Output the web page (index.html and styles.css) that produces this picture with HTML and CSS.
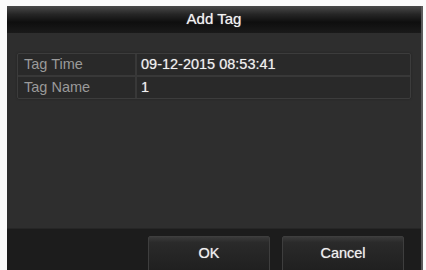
FILE: index.html
```html
<!DOCTYPE html>
<html lang="en">
<head>
    <meta charset="UTF-8">
    <title>Add Tag</title>
    <link rel="stylesheet" href="styles.css">
</head>
<body>
    <section class="dialog">
        <h1 class="dialog-title">Add Tag</h1>
        <div class="dialog-body">
            <div class="field-table">
                <div class="field-row">
                    <span class="field-label">Tag Time</span>
                    <span class="field-value">09-12-2015 08:53:41</span>
                </div>
                <div class="field-row">
                    <span class="field-label">Tag Name</span>
                    <span class="field-value">1</span>
                </div>
            </div>
        </div>
        <div class="dialog-footer">
            <button class="btn" type="button">OK</button>
            <button class="btn" type="button">Cancel</button>
        </div>
    </section>
</body>
</html>
```

FILE: styles.css
```css
html, body {
    margin: 0;
    height: 100%;
    overflow: hidden;
}

body {
    background-color: #fbfbfb;
    font-family: "Liberation Sans", Arial, sans-serif;
    padding: 6px 3px 0 7px;
    box-sizing: border-box;
}

.dialog {
    display: flex;
    flex-direction: column;
    height: 270px;
    background-color: #2e2e2e;
    border-right: 2px solid #5a5a5a;
}

.dialog-title {
    margin: 0;
    height: 27px;
    line-height: 26px;
    text-align: center;
    font-size: 15px;
    font-weight: normal;
    color: #f2f2f2;
    text-shadow: 0 0 1px #aaa;
    background: linear-gradient(#4a4a4a 0%, #262626 30%, #0e0e0e 60%, #1a1a1a 100%);
}

.dialog-body {
    height: 195px;
    padding: 20px 10px 0 10px;
    box-sizing: border-box;
}

.field-table {
    border: 1px solid #3c3c3c;
    border-radius: 2px;
    background-color: #292929;
    box-shadow: 0 0 2px #222;
}

.field-row {
    display: flex;
    height: 21px;
    line-height: 21px;
    font-size: 14.5px;
}

.field-row + .field-row {
    border-top: 2px solid #383838;
}

.field-label {
    width: 111px;
    padding-left: 6px;
    color: #9a9a9a;
    border-right: 2px solid #383838;
}

.field-value {
    padding-left: 4px;
    color: #f0f0f0;
    text-shadow: 0 0 1px #999;
}

.dialog-footer {
    flex: 1;
    display: flex;
    justify-content: flex-end;
    gap: 12px;
    padding: 7px 17px 0 0;
    background-color: #1c1c1c;
    border-top: 1px solid #262626;
}

.btn {
    width: 122px;
    height: 40px;
    padding: 0 0 6px 0;
    background: linear-gradient(#3a3a3a 0%, #2a2a2a 15%, #1e1e1e 100%);
    border: 1px solid #3e3e3e;
    border-radius: 2px;
    font-family: "Liberation Sans", Arial, sans-serif;
    font-size: 14.5px;
    color: #f0f0f0;
    text-shadow: 0 0 1px #aaa;
}
```
